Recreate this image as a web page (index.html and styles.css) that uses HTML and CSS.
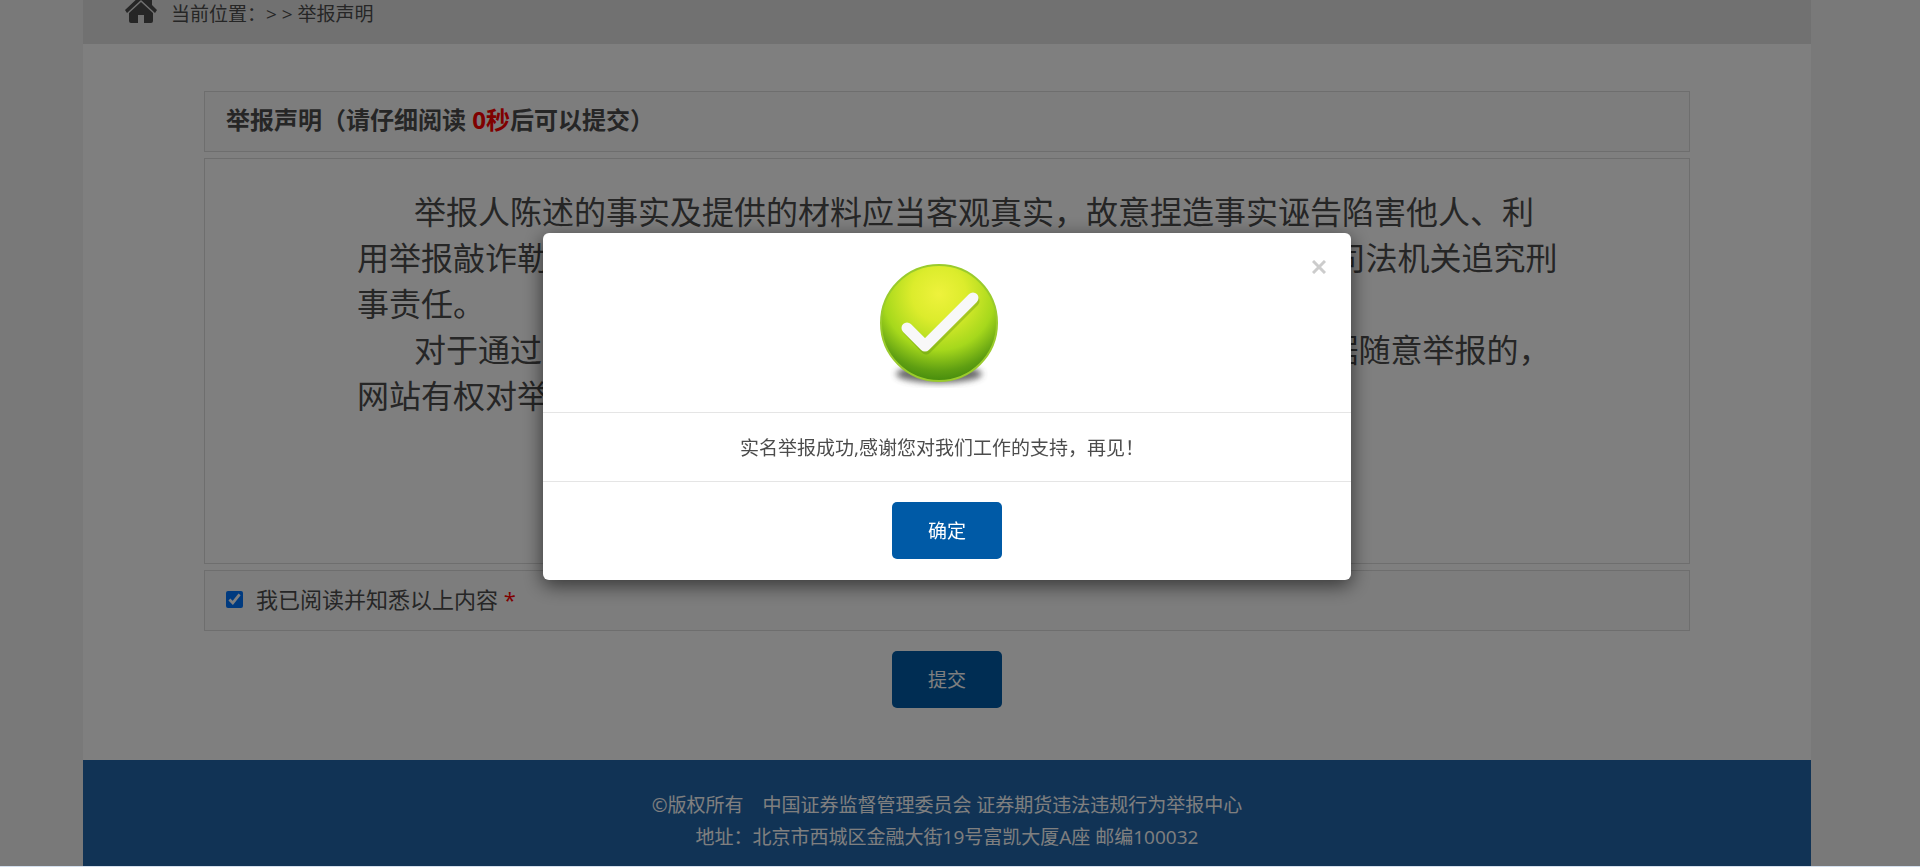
FILE: index.html
```html
<!DOCTYPE html>
<html lang="zh-CN">
<head>
    <meta charset="UTF-8">
    <meta name="viewport" content="width=device-width, initial-scale=1.0">
    <title>举报声明</title>
    <link rel="stylesheet" href="styles.css">
</head>
<body>
    <div class="page">
        <nav class="breadcrumb">
            <svg class="home-icon" viewBox="0 0 32 30" aria-hidden="true">
                <path d="M16 1 0 16l2 3L16 6l14 13 2-3-5-5V1h-5v5z"/>
                <path d="M16 8 4 19v8q0 2 2 2h7v-8h6v8h7q2 0 2-2v-8z"/>
            </svg>
            <span>当前位置：&gt; &gt; 举报声明</span>
        </nav>

        <main class="content">
            <h1 class="panel panel-title">举报声明（请仔细阅读 <span class="red">0秒</span>后可以提交）</h1>

            <div class="panel statement">
                <p>举报人陈述的事实及提供的材料应当客观真实，故意捏造事实诬告陷害他人、利<br>用举报敲诈勒索财物或者具有其他违法犯罪行为， 构成犯罪的， 移送司法机关追究刑<br>事责任。</p>
                <p>对于通过本网站进行实名举报， 但未提供真实身份信息 或没有证据随意举报的，<br>网站有权对举报信息不予受理。</p>
            </div>

            <div class="panel agree">
                <input type="checkbox" id="agree" checked>
                <label for="agree">我已阅读并知悉以上内容 <span class="red">*</span></label>
            </div>

            <button type="button" class="btn">提交</button>
        </main>

        <footer class="footer">
            <p>©版权所有　中国证券监督管理委员会 证券期货违法违规行为举报中心</p>
            <p>地址：北京市西城区金融大街19号富凯大厦A座 邮编100032</p>
        </footer>
    </div>

    <div class="overlay">
        <div class="modal" role="dialog" aria-modal="true" aria-labelledby="modal-text">
            <div class="modal-header">
                <svg class="ok-icon" viewBox="0 0 130 130" aria-hidden="true">
                    <defs>
                        <radialGradient id="ball" cx="50%" cy="25%" r="78%">
                            <stop offset="0" stop-color="#eef23c"/>
                            <stop offset="0.3" stop-color="#dcec2c"/>
                            <stop offset="0.62" stop-color="#a6d81c"/>
                            <stop offset="0.85" stop-color="#5f9f12"/>
                            <stop offset="1" stop-color="#3f860c"/>
                        </radialGradient>
                        <filter id="soft" x="-20%" y="-60%" width="140%" height="220%">
                            <feGaussianBlur stdDeviation="3"/>
                        </filter>
                    </defs>
                    <ellipse cx="64" cy="116" rx="43" ry="9" fill="#444" opacity="0.8" filter="url(#soft)"/>
                    <circle cx="64" cy="65" r="58" fill="url(#ball)" stroke="#9acb2c" stroke-width="2"/>
                    <path d="M32 70 50 89 98 41" transform="translate(1 2)" fill="none" stroke="#5a8a10" stroke-opacity="0.35" stroke-width="11" stroke-linecap="round" stroke-linejoin="round"/>
                    <path d="M32 70 50 88 98 40" fill="none" stroke="#f8f8f8" stroke-width="11" stroke-linecap="round" stroke-linejoin="round"/>
                </svg>
                <button type="button" class="close" aria-label="关闭">
                    <svg viewBox="0 0 14 14" aria-hidden="true"><path d="M1 1 13 13M13 1 1 13"/></svg>
                </button>
            </div>
            <p class="modal-body" id="modal-text">实名举报成功,感谢您对我们工作的支持，再见！</p>
            <div class="modal-footer">
                <button type="button" class="btn">确定</button>
            </div>
        </div>
    </div>
</body>
</html>
```
FILE: styles.css
```css
* {
    box-sizing: border-box;
}
html {
    background-color: #d4e0ee;
}
body {
    margin: 0;
    padding: 0 109px 0 83px;
    min-height: calc(100vh - 1px);
    background-color: #f2f2f2;
    color: #4c4c4c;
    font-family: "Open Sans", "Noto Sans CJK SC", sans-serif;
    font-size: 19px;
}
h1, p {
    margin: 0;
}
.page {
    background-color: #fff;
}
.breadcrumb {
    display: flex;
    align-items: flex-start;
    gap: 14px;
    height: 44px;
    padding-left: 42px;
    background-color: #e2e2e2;
    line-height: 28px;
}
.home-icon {
    width: 32px;
    height: 30px;
    margin-top: -6px;
    fill: #4c4c4c;
}
.content {
    display: flex;
    flex-direction: column;
    gap: 6px;
    padding: 47px 7% 52px;
}
.panel {
    border: 1px solid #dcdcdc;
    padding: 0 21px;
}
.panel-title {
    padding-bottom: 3px;
    background-color: #fafafa;
    font-size: 24px;
    font-weight: bold;
    line-height: 56px;
}
.red {
    color: #f00;
}
.statement {
    min-height: 406px;
    padding: 30px 120px 0 152px;
    font-size: 32px;
    line-height: 46px;
    white-space: nowrap;
}
.statement p {
    text-indent: 57px;
}
.agree {
    display: flex;
    align-items: center;
    gap: 13px;
    padding-bottom: 3px;
    background-color: #fafafa;
    font-size: 22px;
    line-height: 56px;
}
.agree input {
    width: 17px;
    height: 17px;
    margin: 0;
    accent-color: #0075ff;
}
.btn {
    min-width: 110px;
    height: 57px;
    padding: 0 20px 2px;
    border: 0;
    border-radius: 5px;
    background-color: #005aa6;
    color: #fff;
    font: inherit;
    cursor: pointer;
}
.content .btn {
    align-self: center;
    margin-top: 14px;
}
.footer {
    padding: 29px 0 13px;
    background-color: #2266aa;
    color: #fff;
    line-height: 32px;
    text-align: center;
}
.overlay {
    position: fixed;
    top: 0;
    right: 0;
    bottom: 1px;
    left: 0;
    padding: 233px 26px 0 0;
    background-color: rgba(0, 0, 0, 0.5);
}
.modal {
    width: 808px;
    margin: 0 auto;
    border-radius: 6px;
    background-color: #fff;
    box-shadow: 0 5px 20px rgba(0, 0, 0, 0.6);
}
.modal-header {
    display: flex;
    justify-content: center;
    position: relative;
    padding: 25px 15px 24px 0;
    border-bottom: 1px solid #e5e5e5;
}
.ok-icon {
    width: 130px;
    height: 130px;
}
.close {
    position: absolute;
    top: 24px;
    right: 22px;
    width: 20px;
    height: 20px;
    padding: 3px;
    border: 0;
    background: none;
    cursor: pointer;
}
.close svg {
    display: block;
    width: 14px;
    height: 14px;
    stroke: #ccc;
    stroke-width: 3;
}
.modal-body {
    padding: 21px 30px 19px 20px;
    line-height: 28px;
    text-align: center;
}
.modal-footer {
    padding: 20px 20px 21px;
    border-top: 1px solid #e5e5e5;
    text-align: center;
}
.modal-footer .btn {
    display: block;
    margin: 0 auto;
}
```
